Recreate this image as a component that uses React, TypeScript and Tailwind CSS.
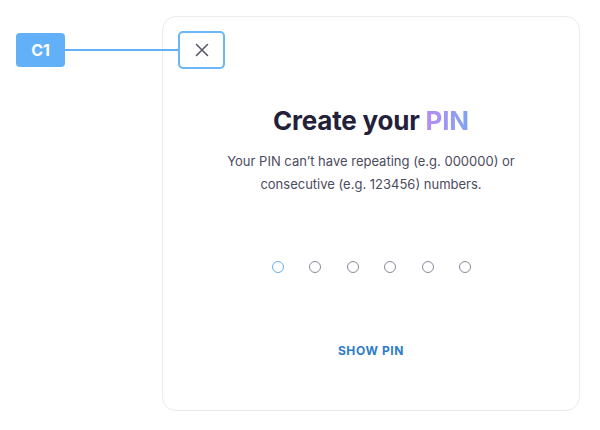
const dots = [0, 1, 2, 3, 4, 5];

export default function App() {
  return (
    <div
      className="relative w-[600px] h-[430px] bg-white"
      style={{ fontFamily: "Inter, 'Noto Sans', sans-serif" }}
    >
      {/* annotation */}
      <div className="absolute left-[16px] top-[33px] flex items-center z-10">
        <div className="w-[49px] h-[34px] rounded-[4px] bg-[#62b0f7] text-white font-bold text-[16px] flex items-center justify-center">
          C1
        </div>
        <div className="w-[113px] h-[2px] bg-[#62b0f7]" />
      </div>

      <div className="pt-[16px] pl-[162px]">
        <div className="w-[418px] h-[395px] border border-[#ebebee] rounded-[14px] bg-white flex flex-col">
          <div className="pt-[14px] pl-[15px]">
            <button className="relative z-20 w-[47px] h-[38px] border-2 border-[#6ab6f7] rounded-[5px] bg-white flex items-center justify-center text-[#5a5868]">
              <svg width="14" height="14" viewBox="0 0 14 14" fill="none" stroke="currentColor" strokeWidth="1.6" strokeLinecap="round">
                <path d="M1.5 1.5L12.5 12.5M12.5 1.5L1.5 12.5" />
              </svg>
            </button>
          </div>

          <h1 className="mt-[36px] text-center text-[26px] leading-[32px] font-bold text-[#23213a] tracking-[-0.2px]">
            Create your{" "}
            <span className="bg-gradient-to-r from-[#b48cf4] to-[#7ea2f1] bg-clip-text text-transparent">PIN</span>
          </h1>

          <p className="mt-[13px] text-center text-[13px] leading-[23px] text-[#4c4b5e] px-10">
            Your PIN can’t have repeating (e.g. 000000) or
            <br />
            consecutive (e.g. 123456) numbers.
          </p>

          <div className="mt-[65px] flex justify-center gap-[25.5px] pl-[1px]">
            {dots.map((d) => (
              <span
                key={d}
                className={
                  d === 0
                    ? "w-[12px] h-[12px] rounded-full border-[1.5px] border-[#62aef2]"
                    : "w-[12px] h-[12px] rounded-full border-[1.5px] border-[#8a8898]"
                }
              />
            ))}
          </div>

          <button className="mt-[69px] self-center text-[12px] font-bold tracking-[0.6px] text-[#2f7bcb]">
            SHOW PIN
          </button>
        </div>
      </div>
    </div>
  );
}
